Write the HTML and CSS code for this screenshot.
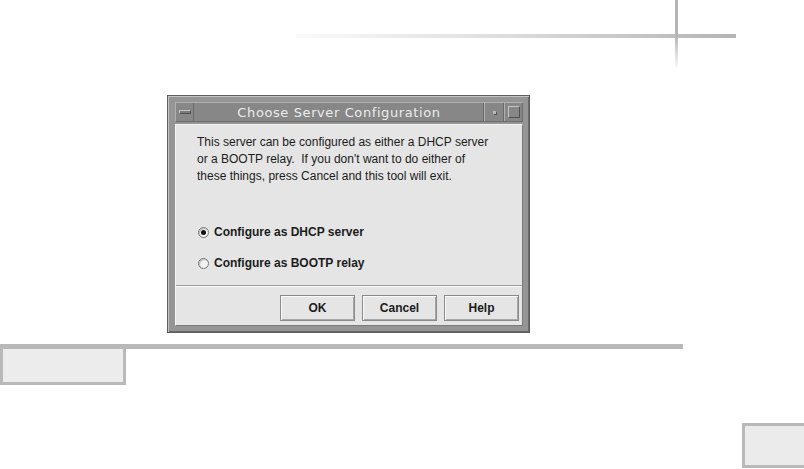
FILE: index.html
```html
<!DOCTYPE html>
<html lang="en">
<head>
    <meta charset="UTF-8">
    <title>Choose Server Configuration</title>
    <link rel="stylesheet" href="styles.css">
</head>
<body>
    <!-- Górna dekoracja strony -->
    <header class="page-top">
        <div class="rule-h"></div>
    </header>

    <!-- Okno dialogowe -->
    <div class="dialog">
        <div class="titlebar">
            <div class="tb-btn tb-menu"><span class="bar-icon"></span></div>
            <div class="tb-title">Choose Server Configuration</div>
            <div class="tb-btn tb-min"><span class="dot-icon"></span></div>
            <div class="tb-btn tb-max"><span class="square-icon"></span></div>
        </div>

        <div class="dialog-body">
            <p class="message">
                This server can be configured as either a DHCP server<br>
                or a BOOTP relay.&nbsp; If you don't want to do either of<br>
                these things, press Cancel and this tool will exit.
            </p>

            <div class="options">
                <label class="option">
                    <span class="radio checked"></span>
                    Configure as DHCP server
                </label>
                <label class="option">
                    <span class="radio"></span>
                    Configure as BOOTP relay
                </label>
            </div>

            <div class="separator"></div>

            <div class="actions">
                <button class="btn">OK</button>
                <button class="btn">Cancel</button>
                <button class="btn">Help</button>
            </div>
        </div>
    </div>

    <!-- Pasek sekcji -->
    <div class="section-bar">
        <div class="section-tab"></div>
    </div>

    <!-- Zakładka w rogu -->
    <div class="corner-tab"></div>
</body>
</html>
```

FILE: styles.css
```css
* {
    margin: 0;
    padding: 0;
    box-sizing: border-box;
}

body {
    background: #fff;
    font-family: 'Liberation Sans', Arial, sans-serif;
    color: #1c1c1c;
    width: 804px;
    height: 469px;
    overflow: hidden;
}

/* Górna dekoracja */
.page-top {
    position: relative;
    height: 95px;
    padding-top: 34px;
}

.rule-h {
    margin-left: 296px;
    width: 440px;
    height: 4px;
    background: linear-gradient(to right, #fafafa, #e2e2e2 40%, #b4b4b4);
}

.page-top::after {
    content: '';
    position: absolute;
    left: 675px;
    top: 0;
    width: 3px;
    height: 70px;
    background: linear-gradient(to bottom, #b4b4b4 50%, #fff);
}

/* Okno dialogowe */
.dialog {
    margin-left: 167px;
    width: 363px;
    height: 238px;
    background: #959595;
    border: 1px solid #5e5e5e;
    box-shadow: inset 1px 1px 0 #c4c4c4, inset -1px -1px 0 #6a6a6a;
    padding: 6px 6px 6px 7px;
    display: flex;
    flex-direction: column;
}

.titlebar {
    height: 20px;
    display: flex;
    background: #878787;
    border-top: 1px solid #b0b0b0;
    border-left: 1px solid #b0b0b0;
    border-bottom: 1px solid #6a6a6a;
}

.tb-btn {
    display: flex;
    align-items: center;
    justify-content: center;
    border-left: 1px solid #b0b0b0;
    box-shadow: inset -1px 0 0 #6a6a6a;
}

.tb-menu {
    width: 18px;
    border-left: none;
}

.tb-min {
    width: 20px;
}

.tb-max {
    width: 19px;
}

.bar-icon {
    display: block;
    width: 12px;
    height: 4px;
    background: #7a7a7a;
    border-top: 1px solid #c4c4c4;
    border-left: 1px solid #c4c4c4;
    border-bottom: 1px solid #505050;
    border-right: 1px solid #505050;
}

.dot-icon {
    display: block;
    width: 3px;
    height: 3px;
    background: #b8b8b8;
    box-shadow: 1px 1px 0 #555;
}

.square-icon {
    display: block;
    width: 12px;
    height: 12px;
    border-top: 1px solid #c4c4c4;
    border-left: 1px solid #c4c4c4;
    border-bottom: 1px solid #505050;
    border-right: 1px solid #505050;
}

.tb-title {
    flex: 1;
    text-align: center;
    font-family: 'DejaVu Sans', sans-serif;
    font-size: 13px;
    line-height: 19px;
    color: #ececec;
    letter-spacing: 0.6px;
    box-shadow: inset -1px 0 0 #6a6a6a;
}

.dialog-body {
    margin-top: 2px;
    flex: 1;
    background: #e5e5e5;
    border-top: 1px solid #f4f4f4;
    border-left: 1px solid #f4f4f4;
    border-right: 1px solid #7a7a7a;
    border-bottom: 1px solid #7a7a7a;
    display: flex;
    flex-direction: column;
}

.message {
    padding: 9px 0 0 21px;
    font-size: 12px;
    line-height: 17px;
}

/* Opcje */
.options {
    padding: 38px 0 0 22px;
    display: flex;
    flex-direction: column;
    gap: 12px;
}

.option {
    display: flex;
    align-items: center;
    gap: 5px;
    font-size: 12px;
    font-weight: bold;
    line-height: 19px;
}

.radio {
    width: 11px;
    height: 11px;
    border-radius: 50%;
    border: 1px solid #777;
    background: #f2f2f2;
    box-shadow: inset 1px 1px 1px #bbb;
    position: relative;
}

.radio.checked::after {
    content: '';
    position: absolute;
    left: 2px;
    top: 2px;
    width: 5px;
    height: 5px;
    border-radius: 50%;
    background: #111;
}

.separator {
    margin-top: 12px;
    height: 2px;
    border-top: 1px solid #9a9a9a;
    border-bottom: 1px solid #fafafa;
}

/* Przyciski */
.actions {
    display: flex;
    justify-content: flex-end;
    gap: 7px;
    padding: 8px 3px 0 0;
}

.btn {
    width: 75px;
    height: 26px;
    font-family: 'Liberation Sans', Arial, sans-serif;
    font-size: 12px;
    font-weight: bold;
    color: #1c1c1c;
    background: #e5e5e5;
    border: 1px solid #8a8a8a;
    box-shadow: inset 1px 1px 0 #fafafa, inset -1px -1px 0 #a8a8a8;
}

/* Pasek sekcji */
.section-bar {
    margin-top: 11px;
    width: 683px;
    border-top: 5px solid #b9b9b9;
}

.section-tab {
    width: 126px;
    height: 36px;
    background: #ececec;
    border: 3px solid #b9b9b9;
    border-top: none;
}

.corner-tab {
    margin: 38px 0 0 742px;
    width: 62px;
    height: 45px;
    background: #ebebeb;
    border: 3px solid #b9b9b9;
    border-right: none;
}
```
